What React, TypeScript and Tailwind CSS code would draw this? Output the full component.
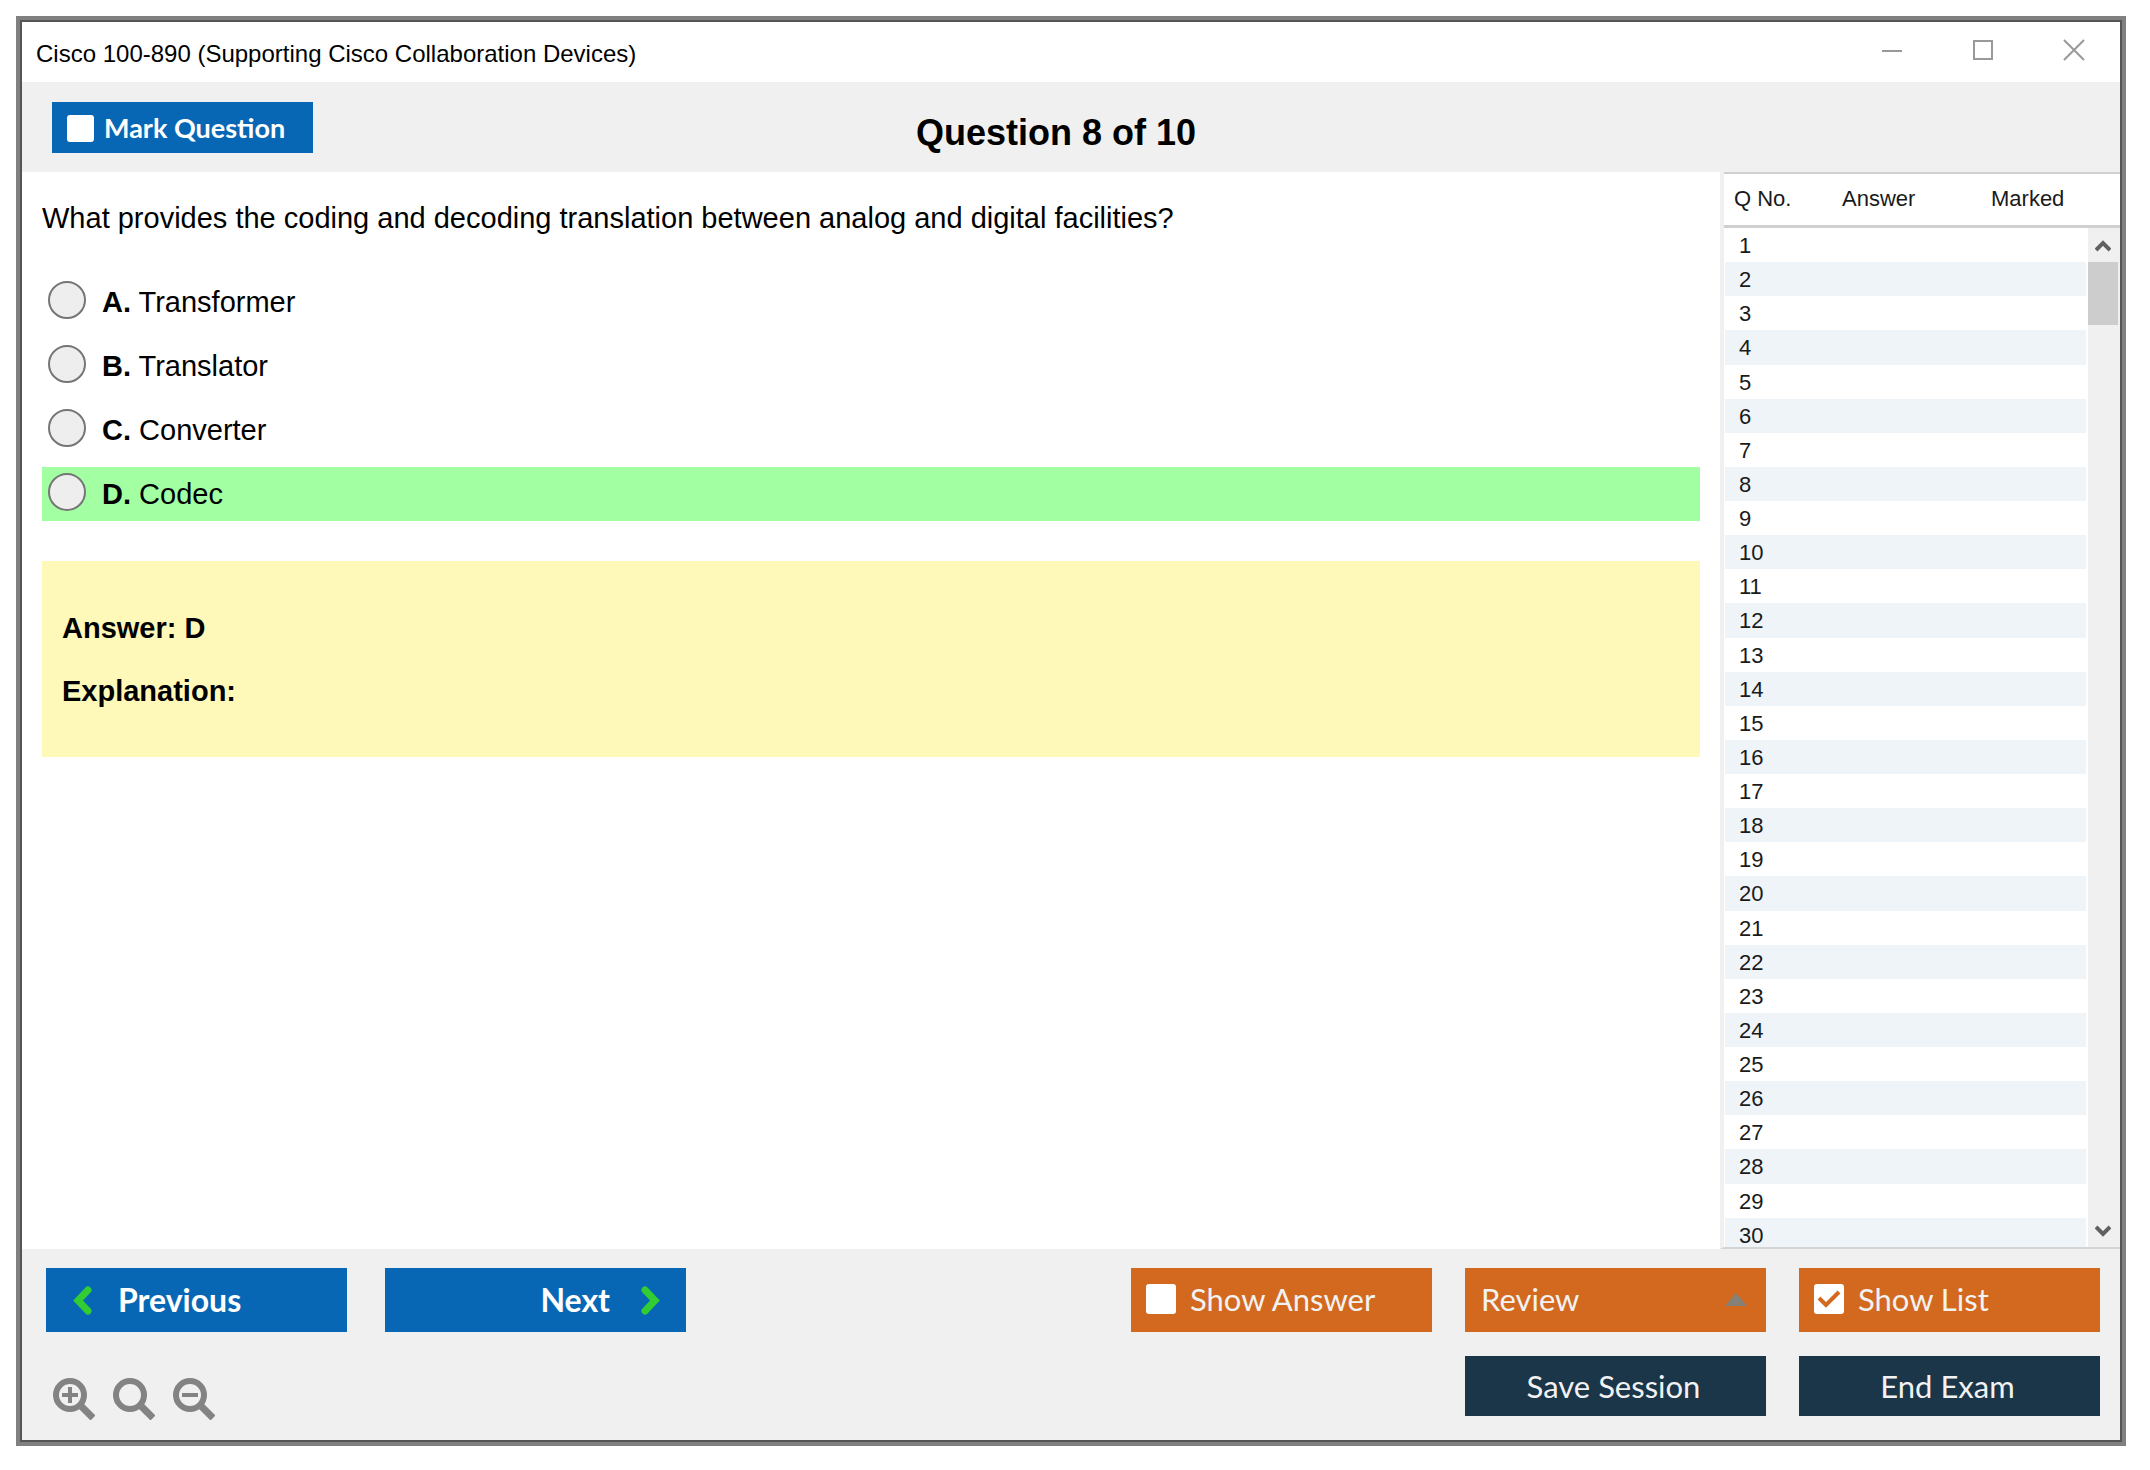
import { FC, ReactNode, useState } from "react";

interface IOption {
  key: string;
  text: string;
}

const OPTIONS: IOption[] = [
  { key: "A", text: "Transformer" },
  { key: "B", text: "Translator" },
  { key: "C", text: "Converter" },
  { key: "D", text: "Codec" },
];

const CORRECT = "D";

const QUESTION_NUMBERS = Array.from({ length: 30 }, (_, i) => i + 1);

const TitleBar: FC = () => {
  return (
    <div className="flex h-[60px] shrink-0 items-center justify-between bg-white pl-[14px] pr-[34px]">
      <h1 className="pt-1 text-2xl">
        Cisco 100-890 (Supporting Cisco Collaboration Devices)
      </h1>
      <div className="flex gap-[67px] pb-1 text-[#999999]">
        <button type="button" aria-label="Minimize">
          <svg width="24" height="24" viewBox="0 0 24 24" fill="none">
            <path d="M2 13h20" stroke="currentColor" strokeWidth="2" />
          </svg>
        </button>
        <button type="button" aria-label="Maximize">
          <svg width="24" height="24" viewBox="0 0 24 24" fill="none">
            <path d="M3 3h18v18H3z" stroke="currentColor" strokeWidth="2" />
          </svg>
        </button>
        <button type="button" aria-label="Close">
          <svg width="24" height="24" viewBox="0 0 24 24" fill="none">
            <path
              d="M2 2l20 20M22 2L2 22"
              stroke="currentColor"
              strokeWidth="2"
            />
          </svg>
        </button>
      </div>
    </div>
  );
};

interface ICheckButtonProps {
  label: string;
  checked: boolean;
  onChange: (checked: boolean) => void;
  className: string;
  boxClassName: string;
}

const CheckButton: FC<ICheckButtonProps> = ({
  label,
  checked,
  onChange,
  className,
  boxClassName,
}) => {
  return (
    <label className={`flex cursor-pointer items-center ${className}`}>
      <span className={`grid shrink-0 ${boxClassName}`}>
        <input
          type="checkbox"
          checked={checked}
          onChange={(e) => onChange(e.target.checked)}
          className="col-start-1 row-start-1 size-full appearance-none rounded-[3px] bg-white"
        />
        {checked && (
          <svg
            viewBox="0 0 30 30"
            fill="none"
            className="pointer-events-none col-start-1 row-start-1 size-full text-[#d2691e]"
          >
            <path d="M5 14l7 7L25 8" stroke="currentColor" strokeWidth="4" />
          </svg>
        )}
      </span>
      {label}
    </label>
  );
};

const QuestionList: FC = () => {
  return (
    <aside className="flex w-[400px] shrink-0 flex-col border-b-2 border-l-4 border-b-[#d4d4d4] border-l-[#f0f0f0] bg-white text-[22px] text-[#1a1a1a]">
      <table
        aria-label="Question list columns"
        className="h-[56px] w-full shrink-0 table-fixed border-separate border-spacing-0 border-t-2 border-b-[3px] border-[#d0d0d0]"
      >
        <thead>
          <tr className="text-left">
            <th scope="col" className="w-[118px] pb-[2px] pl-[10px] font-normal">
              Q No.
            </th>
            <th scope="col" className="w-[149px] pb-[2px] font-normal">
              Answer
            </th>
            <th scope="col" className="pb-[2px] font-normal">
              Marked
            </th>
          </tr>
        </thead>
      </table>
      <div className="flex min-h-0 flex-1">
        <div className="min-w-0 flex-1 overflow-hidden pl-px pr-[2px]">
          <table aria-label="Questions" className="h-[1024px] w-full">
            <tbody>
              {QUESTION_NUMBERS.map((n) => (
                <tr key={n} className="even:bg-[#eff4f9]">
                  <td className="w-[117px] pt-[2px] pb-0 pl-[14px] leading-8">
                    {n}
                  </td>
                  <td className="w-[149px] p-0" />
                  <td className="p-0" />
                </tr>
              ))}
            </tbody>
          </table>
        </div>
        <div className="flex w-[32px] shrink-0 flex-col bg-[#f0f0f0] pr-[2px] text-[#606060]">
          <button
            type="button"
            aria-label="Scroll up"
            className="flex h-[34px] items-center justify-center pt-[2px]"
          >
            <svg width="16" height="14" viewBox="0 0 16 14" fill="none">
              <path d="M1 11l7-7 7 7" stroke="currentColor" strokeWidth="4" />
            </svg>
          </button>
          <div className="h-[63px] bg-[#cdcdcd]" />
          <button
            type="button"
            aria-label="Scroll down"
            className="mt-auto flex h-[32px] items-center justify-center"
          >
            <svg width="16" height="14" viewBox="0 0 16 14" fill="none">
              <path d="M1 3l7 7 7-7" stroke="currentColor" strokeWidth="4" />
            </svg>
          </button>
        </div>
      </div>
    </aside>
  );
};

const ZoomButton: FC<{ label: string; children?: ReactNode }> = ({
  label,
  children,
}) => {
  return (
    <button type="button" aria-label={label}>
      <svg
        width="42"
        height="42"
        viewBox="0 0 42 42"
        fill="none"
        stroke="#838383"
      >
        <circle cx="17" cy="17" r="14" strokeWidth="6" />
        <path d="M27 27l13 13" strokeWidth="7" />
        {children}
      </svg>
    </button>
  );
};

export default function App() {
  const [marked, setMarked] = useState(false);
  const [showAnswer, setShowAnswer] = useState(false);
  const [showList, setShowList] = useState(true);
  const [selected, setSelected] = useState("");

  return (
    <div className="flex h-screen bg-white pt-4 pr-6 pb-6 pl-4 font-['Liberation_Sans',Arial,sans-serif] text-black">
      <div className="flex min-w-0 flex-1 border-4 border-[#808080]">
        <div className="flex min-w-0 flex-1 flex-col border-2 border-[#555555] bg-[#f0f0f0]">
          <TitleBar />

          <header className="grid h-[90px] shrink-0 grid-cols-[1fr_auto_1fr] items-center pr-[60px] pl-[30px]">
            <CheckButton
              label="Mark Question"
              checked={marked}
              onChange={setMarked}
              className="h-[51px] w-[261px] gap-[10px] bg-[#0867b5] pt-[2px] pl-[15px] font-['Lato',sans-serif] text-[27px] font-bold text-white"
              boxClassName="size-[27px]"
            />
            <h2 className="pt-[11px] text-[36px] font-bold">
              Question 8 of 10
            </h2>
          </header>

          <div className="flex min-h-0 flex-1">
            <main className="min-w-0 flex-1 bg-white pt-[28px] pr-[20px] pl-5 text-[29px] leading-[36px]">
              <p>
                What provides the coding and decoding translation between analog
                and digital facilities?
              </p>

              <div className="mt-[39px] flex flex-col gap-[10px]">
                {OPTIONS.map((option) => (
                  <label
                    key={option.key}
                    className={`flex h-[54px] cursor-pointer items-start pt-[6px] pl-[6px] ${
                      option.key === CORRECT ? "bg-[#a2ffa2]" : ""
                    }`}
                  >
                    <input
                      type="radio"
                      name="answer"
                      checked={selected === option.key}
                      onChange={() => setSelected(option.key)}
                      className="mr-4 size-[38px] shrink-0 appearance-none rounded-full border-2 border-[#767676] bg-[#eeeeee] checked:border-[10px]"
                    />
                    <span className="pt-[3px]">
                      <b>{option.key}.</b> {option.text}
                    </span>
                  </label>
                ))}
              </div>

              <div className="mt-10 flex h-[196px] flex-col gap-[27px] bg-[#fef8b9] px-5 pt-[49px] font-bold">
                <p>Answer: {CORRECT}</p>
                <p>Explanation:</p>
              </div>
            </main>
            {showList && <QuestionList />}
          </div>

          <footer className="flex h-[191px] shrink-0 justify-between pt-[19px] pr-5 pl-6 font-['Lato',sans-serif] text-[31px] text-[#f2f2f2]">
            <div>
              <div className="flex gap-[38px] text-[32px] font-bold text-white">
                <button
                  type="button"
                  className="flex h-16 w-[301px] items-center gap-[25px] bg-[#0867b5] pl-[27px]"
                >
                  <svg width="20" height="29" viewBox="0 0 20 29" fill="none">
                    <path
                      d="M15 4L5 14.5L15 25"
                      stroke="#32cd32"
                      strokeWidth="7"
                      strokeLinecap="round"
                    />
                  </svg>
                  Previous
                </button>
                <button
                  type="button"
                  className="flex h-16 w-[301px] items-center justify-end gap-[30px] bg-[#0867b5] pr-[26px]"
                >
                  Next
                  <svg width="20" height="29" viewBox="0 0 20 29" fill="none">
                    <path
                      d="M5 4L15 14.5L5 25"
                      stroke="#32cd32"
                      strokeWidth="7"
                      strokeLinecap="round"
                    />
                  </svg>
                </button>
              </div>
              <div className="mt-[46px] ml-[7px] flex gap-[18px]">
                <ZoomButton label="Zoom in">
                  <path d="M9 17h16M17 9v16" strokeWidth="4" />
                </ZoomButton>
                <ZoomButton label="Reset zoom" />
                <ZoomButton label="Zoom out">
                  <path d="M9 17h16" strokeWidth="4" />
                </ZoomButton>
              </div>
            </div>

            <div className="grid auto-rows-min grid-cols-[301px_301px_301px] gap-x-[33px] gap-y-6">
              <CheckButton
                label="Show Answer"
                checked={showAnswer}
                onChange={setShowAnswer}
                className="h-16 gap-[14px] bg-[#d2691e] pb-[2px] pl-[15px]"
                boxClassName="size-[30px]"
              />
              <button
                type="button"
                className="flex h-16 items-center justify-between bg-[#d2691e] pr-[19px] pb-[2px] pl-4"
              >
                Review
                <svg width="22" height="13" viewBox="0 0 22 13">
                  <path d="M11 0l11 13H0z" fill="#858078" />
                </svg>
              </button>
              <CheckButton
                label="Show List"
                checked={showList}
                onChange={setShowList}
                className="h-16 gap-[14px] bg-[#d2691e] pb-[2px] pl-[15px]"
                boxClassName="size-[30px]"
              />
              <button
                type="button"
                className="col-start-2 h-[60px] bg-[#1b3549] pr-1"
              >
                Save Session
              </button>
              <button type="button" className="h-[60px] bg-[#1b3549] pr-1">
                End Exam
              </button>
            </div>
          </footer>
        </div>
      </div>
    </div>
  );
}
